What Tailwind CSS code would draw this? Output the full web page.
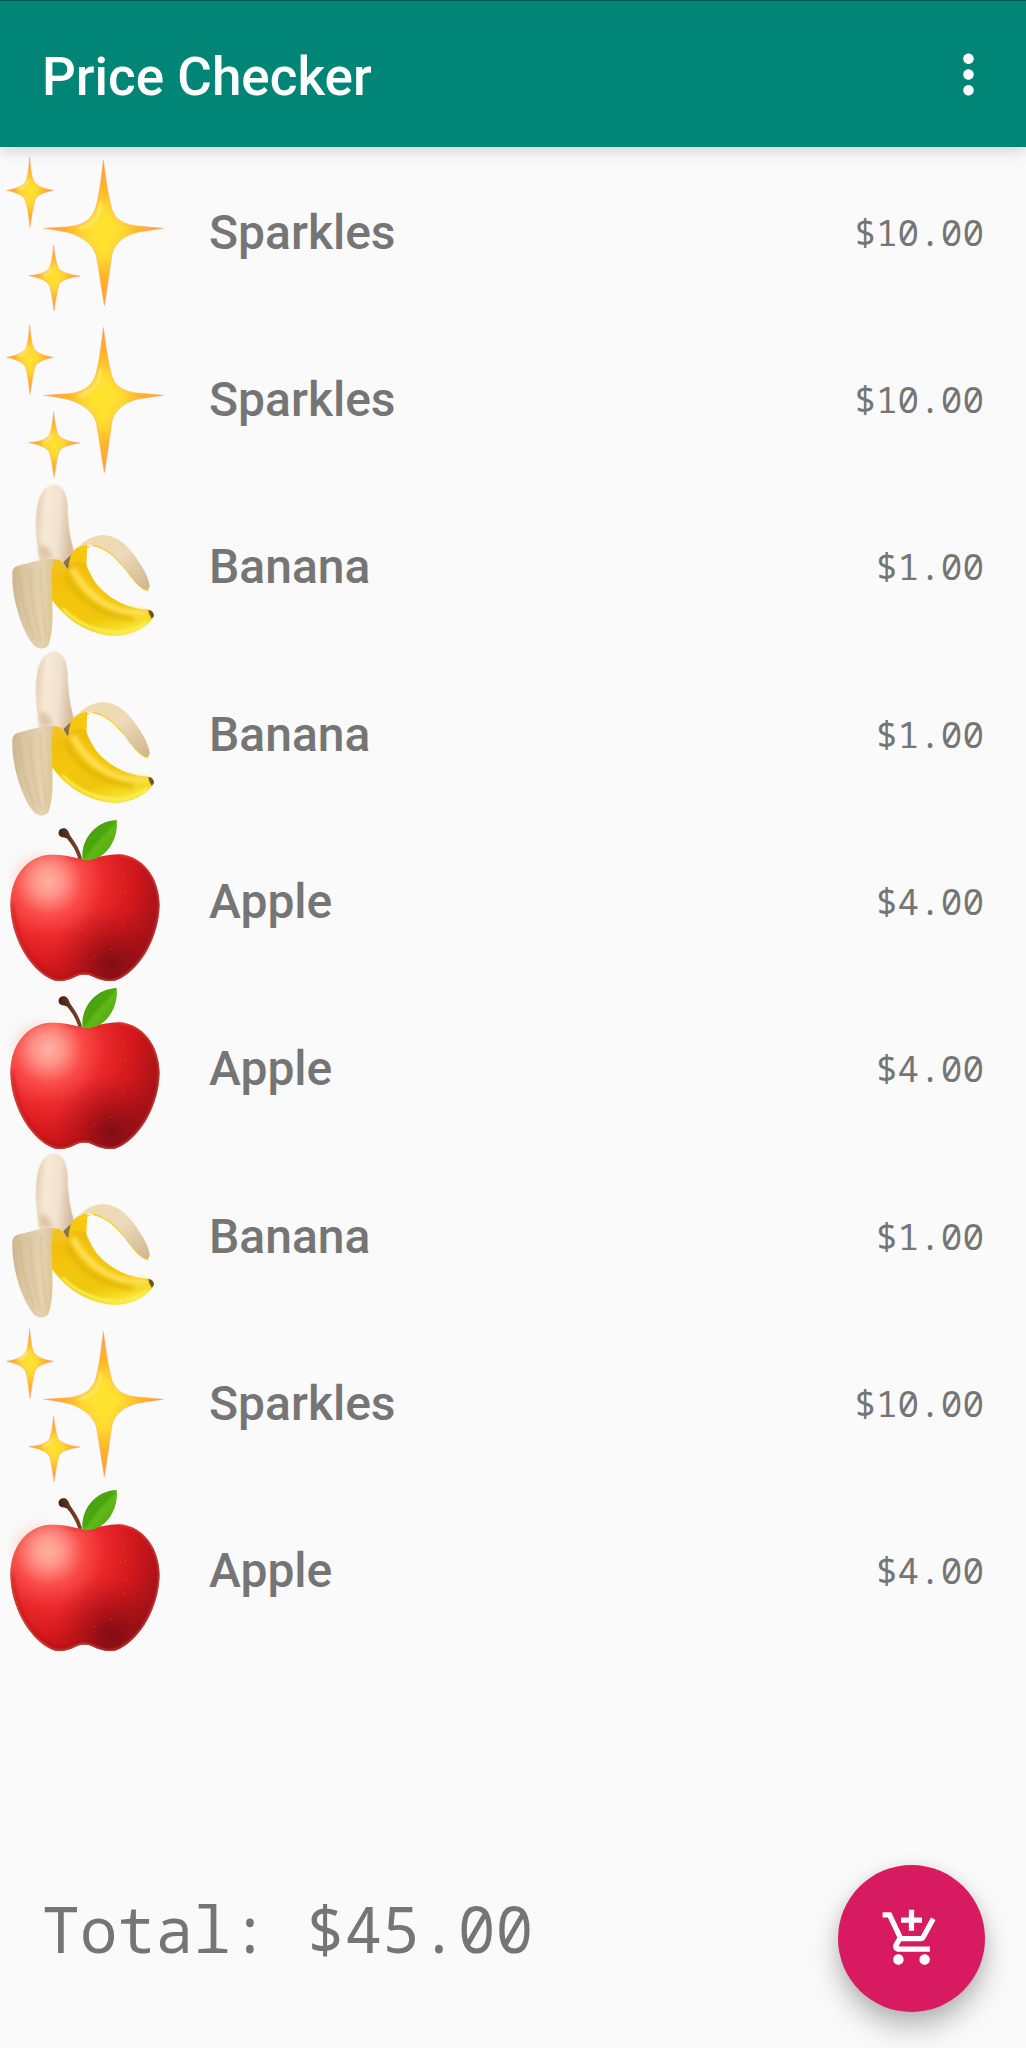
<!DOCTYPE html>
<html lang="en">
<head>
<meta charset="utf-8">
<meta name="viewport" content="width=device-width, initial-scale=1">
<title>Price Checker</title>
<script src="https://cdn.jsdelivr.net/npm/@tailwindcss/browser@4"></script>
</head>
<body class="flex min-h-screen flex-col bg-[#fafafa] font-['Roboto',sans-serif] text-[#757575]">

<!-- Shared artwork for the product rows -->
<svg class="absolute h-0 w-0" aria-hidden="true">
  <defs>
    <radialGradient id="star" cx=".5" cy=".5" r=".5">
      <stop offset="0" stop-color="#ffe433"/><stop offset=".35" stop-color="#ffd630"/><stop offset=".62" stop-color="#ffb428"/><stop offset="1" stop-color="#ff9a45"/>
    </radialGradient>
    <linearGradient id="flesh" x1="0" x2="1" y1="0" y2=".15">
      <stop offset="0" stop-color="#e2c9a8"/><stop offset=".3" stop-color="#f6e9d6"/><stop offset=".65" stop-color="#f2e3d0"/><stop offset="1" stop-color="#d5bb9c"/>
    </linearGradient>
    <linearGradient id="peelL" x1="0" x2="1" y1="0" y2="0">
      <stop offset="0" stop-color="#cdb58b"/><stop offset=".25" stop-color="#d9c5a0"/><stop offset=".7" stop-color="#e4d2b1"/><stop offset="1" stop-color="#dcc38d"/>
    </linearGradient>
    <linearGradient id="peelR" x1="0" x2="1" y1="0" y2="1">
      <stop offset="0" stop-color="#f0dcae"/><stop offset=".5" stop-color="#ecd9b8"/><stop offset="1" stop-color="#cfb58c"/>
    </linearGradient>
    <linearGradient id="skin" x1=".2" x2=".6" y1="0" y2="1">
      <stop offset="0" stop-color="#f0b90c"/><stop offset=".4" stop-color="#f3c60c"/><stop offset=".75" stop-color="#efc70a"/><stop offset="1" stop-color="#f8e535"/>
    </linearGradient>
    <radialGradient id="red" gradientUnits="userSpaceOnUse" cx="145" cy="205" r="340">
      <stop offset="0" stop-color="#ffb0a4"/><stop offset=".13" stop-color="#ff9488"/><stop offset=".3" stop-color="#fa4c4a"/><stop offset=".5" stop-color="#ea282b"/><stop offset=".75" stop-color="#d3181c"/><stop offset="1" stop-color="#a81218"/>
    </radialGradient>
    <radialGradient id="shade" gradientUnits="userSpaceOnUse" cx="330" cy="450" r="170">
      <stop offset="0" stop-color="#6d0b12" stop-opacity=".75"/><stop offset=".5" stop-color="#8d0d14" stop-opacity=".4"/><stop offset="1" stop-color="#a01015" stop-opacity="0"/>
    </radialGradient>
    <linearGradient id="leaf" x1="0" x2="1" y1="0" y2="1">
      <stop offset="0" stop-color="#3c9209"/><stop offset=".45" stop-color="#4fa80f"/><stop offset=".55" stop-color="#61b818"/><stop offset="1" stop-color="#47a00c"/>
    </linearGradient>
    <linearGradient id="stem" x1="0" x2="1" y1="0" y2="0">
      <stop offset="0" stop-color="#42200f"/><stop offset=".6" stop-color="#6b3a26"/><stop offset="1" stop-color="#7a3f2a"/>
    </linearGradient>
    <filter id="halo" x="-50%" y="-50%" width="200%" height="200%"><feGaussianBlur stdDeviation="16"/></filter>
    <filter id="soft" x="-20%" y="-20%" width="140%" height="140%"><feGaussianBlur stdDeviation="6"/></filter>
    <filter id="edge" x="-20%" y="-20%" width="140%" height="140%"><feGaussianBlur stdDeviation="3"/></filter>
    <filter id="rim" x="-5%" y="-5%" width="110%" height="110%"><feGaussianBlur stdDeviation="1.500"/></filter>
    <clipPath id="appleClip"><path d="M243 138C215 130 185 124 150 125C78 130 31 195 31 276C33 370 85 462 148 496C175 512 205 502 226 491Q253 478 280 491C302 502 335 512 362 496C425 462 477 370 479 276C478 195 430 130 360 124C320 123 285 137 243 138Z"/></clipPath>

    <symbol id="sparkles" viewBox="0 4 501 501">
      <g stroke="#ffa050" stroke-opacity=".7" stroke-width="2" stroke-linejoin="round" filter="url(#rim)">
        <path fill="url(#star)" d="M89 36C92 66 94 92 102 108C114 124 134 129 160 134C134 140 115 146 106 160C98 184 95 216 90 245C86 216 84 184 76 162C66 146 46 140 20 134C46 129 64 124 77 108C85 92 86 66 89 36Z"/>
        <path fill="url(#star)" d="M310 44C317 94 324 150 336 192C348 225 376 237 412 241L490 248L416 259C376 267 346 290 336 324C328 376 322 430 313 480C304 430 298 376 289 330C279 296 250 276 213 263C190 256 160 252 132 248C165 246 190 245 215 242C254 236 276 218 286 190C298 150 304 94 310 44Z"/>
        <path fill="url(#star)" d="M161 298C164 324 167 348 174 366C184 380 206 386 240 391C208 396 186 402 177 416C170 440 167 468 162 495C158 468 155 440 149 420C140 403 118 396 86 390C120 387 138 381 149 366C156 348 158 324 161 298Z"/>
      </g>
      <path filter="url(#soft)" fill="#ffe22e" d="M310 170C318 215 335 240 375 250C335 262 318 290 312 350C306 295 292 268 250 252C290 240 304 212 310 170Z"/>
      <path filter="url(#edge)" fill="none" stroke="#fff0a0" stroke-opacity=".75" stroke-width="6" stroke-linecap="round" d="M303 170C299 212 280 238 238 249M82 105C78 118 66 126 54 131M154 372C150 380 140 386 132 389"/>
    </symbol>

    <symbol id="banana" viewBox="0 18 501 501">
      <g filter="url(#rim)">
      <path fill="url(#flesh)" d="M118 252C112 210 103 160 110 102C115 52 136 25 164 25C188 26 201 52 203 92C204 150 211 190 222 226L208 280L180 262Z"/>
      <path filter="url(#soft)" fill="#c69a6b" fill-opacity=".45" d="M118 205L140 212L160 245L120 250Z"/>
      <path fill="#8c7146" d="M190 258L212 238L210 278L201 280Z"/>
      <path fill="#f6c70e" d="M206 280C206 245 218 218 244 208L262 205L259 270L290 330L230 320Z"/>
      <path fill="url(#skin)" d="M152 252C178 248 190 272 204 279C210 262 220 250 258 262C270 310 310 358 370 384C398 396 425 401 447 401C459 404 463 413 461 423C440 455 400 476 350 480C270 480 195 430 155 370Z"/>
      <path filter="url(#soft)" fill="none" stroke="#ffe052" stroke-width="20" stroke-linecap="round" d="M222 286C250 340 300 382 355 402Q385 410 432 411"/>
      <path filter="url(#soft)" fill="none" stroke="#dcae07" stroke-opacity=".6" stroke-width="16" d="M200 300C230 370 300 416 400 430"/>
      <path filter="url(#edge)" fill="none" stroke="#fbee55" stroke-width="9" stroke-linecap="round" d="M190 400C230 442 290 468 350 469Q400 466 438 440"/>
      <path fill="#6d542a" d="M445 402Q461 404 462 420L455 428Q446 416 445 402Z"/>
      <path fill="#f5cf18" d="M232 232C242 215 258 209 276 209C320 218 345 245 375 280C398 312 418 340 444 346L449 328L400 260L300 195Z"/>
      <path fill="url(#peelR)" d="M230 220C246 196 275 180 308 177C345 178 375 200 400 233C425 267 445 300 449 328Q448 342 436 340C412 332 394 302 372 274C348 243 320 215 282 207C258 205 243 208 230 220Z"/>
      <path fill="#f2c21c" d="M150 254C166 246 180 248 192 266L205 282L158 300L157 400Z"/>
      <path fill="url(#peelL)" d="M37 290C38 276 46 270 62 267L132 249C145 247 155 248 165 251C152 270 154 310 156 380C160 430 156 480 145 508C136 520 120 521 103 509C68 470 34 370 37 290Z"/>
      <path filter="url(#edge)" fill="none" stroke="#b99c6d" stroke-opacity=".35" stroke-width="4" d="M60 290Q62 390 105 490M90 280Q92 390 122 495M122 270Q124 380 138 480"/>
      </g>
    </symbol>

    <symbol id="apple" viewBox="0 9 501 501">
      <path fill="url(#stem)" d="M177 66C172 52 183 43 195 46C207 52 206 60 212 70C228 92 240 112 246 136L237 144C230 118 218 96 200 76C190 72 181 74 177 66Z"/>
      <ellipse cx="125" cy="200" rx="85" ry="75" fill="#ff8a7c" fill-opacity=".25" filter="url(#halo)"/>
      <path fill="url(#red)" d="M243 138C215 130 185 124 150 125C78 130 31 195 31 276C33 370 85 462 148 496C175 512 205 502 226 491Q253 478 280 491C302 502 335 512 362 496C425 462 477 370 479 276C478 195 430 130 360 124C320 123 285 137 243 138Z"/>
      <g clip-path="url(#appleClip)">
        <path fill="url(#shade)" d="M120 260H500V520H120Z"/>
        <path filter="url(#soft)" fill="none" stroke="#a80f14" stroke-opacity=".6" stroke-width="16" d="M31 270C33 370 85 462 148 496C175 512 205 502 226 491Q253 478 280 491"/>
        <path filter="url(#edge)" fill="none" stroke="#d9664f" stroke-opacity=".65" stroke-width="7" d="M150 125C78 130 31 195 31 276C33 370 85 462 148 496C175 512 205 502 226 491Q253 478 280 491C302 502 335 512 362 496C425 462 477 370 479 276C478 195 430 130 360 124"/>
        <path filter="url(#soft)" fill="#a81218" fill-opacity=".5" d="M180 126Q245 158 310 126L250 140Z"/>
      </g>
      <path fill="url(#leaf)" d="M248 140C240 88 280 24 350 21C356 70 326 132 272 141Q258 143 248 140Z"/>
      <path filter="url(#edge)" fill="none" stroke="#368a08" stroke-opacity=".6" stroke-width="3" d="M252 134Q282 76 345 28"/>
      <path fill="none" stroke="#ff8a7a" stroke-opacity=".4" stroke-width="4" stroke-linecap="round" d="M252 285h0M192 310h0M137 307h0M233 340h0M245 348h0M131 355h0M177 386h0M361 237h0M376 233h0M378 290h0M370 329h0M283 431h0M332 408h0M372 191h0"/>
    </symbol>
  </defs>
</svg>

<header class="relative z-10 flex h-[147px] items-center justify-between border-t border-[#00574b] bg-[#008577] pr-[26px] pl-[42px] shadow-[0_4px_14px_rgba(0,0,0,0.16)]">
  <h1 class="pt-1.5 text-[53px] leading-[60px] font-medium text-white">Price Checker</h1>
  <button type="button" aria-label="More options" class="text-white">
    <svg class="size-[63px]" viewBox="0 0 24 24" fill="currentColor" aria-hidden="true"><path d="M12 8c1.1 0 2-.9 2-2s-.9-2-2-2-2 .9-2 2 .9 2 2 2zm0 2c-1.1 0-2 .9-2 2s.9 2 2 2 2-.9 2-2-.9-2-2-2zm0 6c-1.1 0-2 .9-2 2s.9 2 2 2 2-.9 2-2-.9-2-2-2z"/></svg>
  </button>
</header>

<main class="flex-1">
  <ul>
    <li class="flex h-[167px] items-center gap-[42px] pr-[42px] nth-[3n]:h-[168px]">
      <svg class="size-[167px] shrink-0" aria-hidden="true"><use href="#sparkles"/></svg>
      <span class="flex-1 pt-1 text-[48px] leading-[56px] font-medium">Sparkles</span>
      <span class="pt-1 font-['Noto_Sans_Mono','Droid_Sans_Mono','DejaVu_Sans_Mono',monospace] text-[36px] leading-[44px]">$10.00</span>
    </li>
    <li class="flex h-[167px] items-center gap-[42px] pr-[42px] nth-[3n]:h-[168px]">
      <svg class="size-[167px] shrink-0" aria-hidden="true"><use href="#sparkles"/></svg>
      <span class="flex-1 pt-1 text-[48px] leading-[56px] font-medium">Sparkles</span>
      <span class="pt-1 font-['Noto_Sans_Mono','Droid_Sans_Mono','DejaVu_Sans_Mono',monospace] text-[36px] leading-[44px]">$10.00</span>
    </li>
    <li class="flex h-[167px] items-center gap-[42px] pr-[42px] nth-[3n]:h-[168px]">
      <svg class="size-[167px] shrink-0" aria-hidden="true"><use href="#banana"/></svg>
      <span class="flex-1 pt-1 text-[48px] leading-[56px] font-medium">Banana</span>
      <span class="pt-1 font-['Noto_Sans_Mono','Droid_Sans_Mono','DejaVu_Sans_Mono',monospace] text-[36px] leading-[44px]">$1.00</span>
    </li>
    <li class="flex h-[167px] items-center gap-[42px] pr-[42px] nth-[3n]:h-[168px]">
      <svg class="size-[167px] shrink-0" aria-hidden="true"><use href="#banana"/></svg>
      <span class="flex-1 pt-1 text-[48px] leading-[56px] font-medium">Banana</span>
      <span class="pt-1 font-['Noto_Sans_Mono','Droid_Sans_Mono','DejaVu_Sans_Mono',monospace] text-[36px] leading-[44px]">$1.00</span>
    </li>
    <li class="flex h-[167px] items-center gap-[42px] pr-[42px] nth-[3n]:h-[168px]">
      <svg class="size-[167px] shrink-0" aria-hidden="true"><use href="#apple"/></svg>
      <span class="flex-1 pt-1 text-[48px] leading-[56px] font-medium">Apple</span>
      <span class="pt-1 font-['Noto_Sans_Mono','Droid_Sans_Mono','DejaVu_Sans_Mono',monospace] text-[36px] leading-[44px]">$4.00</span>
    </li>
    <li class="flex h-[167px] items-center gap-[42px] pr-[42px] nth-[3n]:h-[168px]">
      <svg class="size-[167px] shrink-0" aria-hidden="true"><use href="#apple"/></svg>
      <span class="flex-1 pt-1 text-[48px] leading-[56px] font-medium">Apple</span>
      <span class="pt-1 font-['Noto_Sans_Mono','Droid_Sans_Mono','DejaVu_Sans_Mono',monospace] text-[36px] leading-[44px]">$4.00</span>
    </li>
    <li class="flex h-[167px] items-center gap-[42px] pr-[42px] nth-[3n]:h-[168px]">
      <svg class="size-[167px] shrink-0" aria-hidden="true"><use href="#banana"/></svg>
      <span class="flex-1 pt-1 text-[48px] leading-[56px] font-medium">Banana</span>
      <span class="pt-1 font-['Noto_Sans_Mono','Droid_Sans_Mono','DejaVu_Sans_Mono',monospace] text-[36px] leading-[44px]">$1.00</span>
    </li>
    <li class="flex h-[167px] items-center gap-[42px] pr-[42px] nth-[3n]:h-[168px]">
      <svg class="size-[167px] shrink-0" aria-hidden="true"><use href="#sparkles"/></svg>
      <span class="flex-1 pt-1 text-[48px] leading-[56px] font-medium">Sparkles</span>
      <span class="pt-1 font-['Noto_Sans_Mono','Droid_Sans_Mono','DejaVu_Sans_Mono',monospace] text-[36px] leading-[44px]">$10.00</span>
    </li>
    <li class="flex h-[167px] items-center gap-[42px] pr-[42px] nth-[3n]:h-[168px]">
      <svg class="size-[167px] shrink-0" aria-hidden="true"><use href="#apple"/></svg>
      <span class="flex-1 pt-1 text-[48px] leading-[56px] font-medium">Apple</span>
      <span class="pt-1 font-['Noto_Sans_Mono','Droid_Sans_Mono','DejaVu_Sans_Mono',monospace] text-[36px] leading-[44px]">$4.00</span>
    </li>
  </ul>
</main>

<footer class="flex items-center justify-between pr-[41px] pb-9 pl-[42px]">
  <p class="pb-5 font-['Noto_Sans_Mono','Droid_Sans_Mono','DejaVu_Sans_Mono',monospace] text-[63px] leading-[72px]">Total: $45.00</p>
  <button type="button" aria-label="Add item to cart" class="flex size-[147px] shrink-0 items-center justify-center rounded-full bg-[#d81b60] text-white shadow-[0_16px_28px_rgba(0,0,0,0.25),0_2px_16px_rgba(0,0,0,0.08)]">
    <svg class="size-[63px]" viewBox="0 0 24 24" fill="currentColor" aria-hidden="true"><path d="M11 9h2V6h3V4h-3V1h-2v3H8v2h3v3zm-4 9c-1.1 0-1.99.9-1.99 2S5.900 22 7 22s2-.9 2-2-.9-2-2-2zm10 0c-1.1 0-1.99.9-1.99 2s.89 2 1.990 2 2-.9 2-2-.9-2-2-2zm-9.830-3.250l.03-.12.9-1.630h7.450c.75 0 1.410-.41 1.750-1.030l3.860-7.010L19.420 4h-.01l-1.100 2-2.760 5H8.530l-.13-.27L6.160 6l-.95-2-.94-2H1v2h2l3.600 7.590-1.350 2.450c-.16.28-.25.61-.25.96 0 1.100.9 2 2 2h12v-2H7.420c-.13 0-.25-.11-.25-.25z"/></svg>
  </button>
</footer>
</body>
</html>
